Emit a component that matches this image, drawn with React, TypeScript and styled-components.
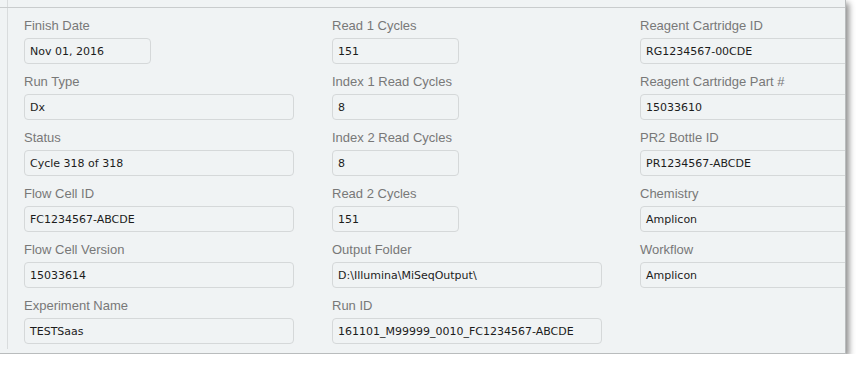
import React from 'react';
import styled, {createGlobalStyle} from "styled-components";

type fieldType = {
    label: string
    value: string
    wide?: boolean
}

const columns: Array<Array<fieldType>> = [
    [
        {label: 'Finish Date', value: 'Nov 01, 2016'},
        {label: 'Run Type', value: 'Dx', wide: true},
        {label: 'Status', value: 'Cycle 318 of 318', wide: true},
        {label: 'Flow Cell ID', value: 'FC1234567-ABCDE', wide: true},
        {label: 'Flow Cell Version', value: '15033614', wide: true},
        {label: 'Experiment Name', value: 'TESTSaas', wide: true},
    ],
    [
        {label: 'Read 1 Cycles', value: '151'},
        {label: 'Index 1 Read Cycles', value: '8'},
        {label: 'Index 2 Read Cycles', value: '8'},
        {label: 'Read 2 Cycles', value: '151'},
        {label: 'Output Folder', value: 'D:\\Illumina\\MiSeqOutput\\', wide: true},
        {label: 'Run ID', value: '161101_M99999_0010_FC1234567-ABCDE', wide: true},
    ],
    [
        {label: 'Reagent Cartridge ID', value: 'RG1234567-00CDE', wide: true},
        {label: 'Reagent Cartridge Part #', value: '15033610', wide: true},
        {label: 'PR2 Bottle ID', value: 'PR1234567-ABCDE', wide: true},
        {label: 'Chemistry', value: 'Amplicon', wide: true},
        {label: 'Workflow', value: 'Amplicon', wide: true},
    ],
]

const App = () => {
    return (
        <>
            <GlobalStyle/>
            <Panel>
                <Content>
                    {columns.map((col, i) => (
                        <Column key={i}>
                            {col.map(f => (
                                <Field key={f.label}>
                                    <Label>{f.label}</Label>
                                    <ValueBox wide={f.wide}>{f.value}</ValueBox>
                                </Field>
                            ))}
                        </Column>
                    ))}
                </Content>
            </Panel>
        </>
    )
}

export default App

const GlobalStyle = createGlobalStyle`
  body {
    margin: 0;
    background: #ffffff;
    font-family: "Liberation Sans", Arial, sans-serif;
  }
`

const Panel = styled.div`
  width: 846px;
  height: 354px;
  overflow: hidden;
  box-sizing: border-box;
  border-right: 1px solid #b9bcbd;
  border-bottom: 1px solid #b9bcbd;
  box-shadow: 3px 3px 6px rgba(0, 0, 0, 0.45);
  background: linear-gradient(#c9cccd, #c9cccd) 0 7px / 100% 1px no-repeat,
  linear-gradient(#d9dcdd, #d9dcdd) 7px 0 / 1px 349px no-repeat,
  #f0f3f4;
`

const Content = styled.div`
  display: grid;
  grid-template-columns: 308px 308px 308px;
  padding: 16px 0 0 24px;
`

const Column = styled.div`
  display: flex;
  flex-direction: column;
  gap: 8px;
`

const Field = styled.div`
  display: flex;
  flex-direction: column;
  gap: 3px;
`

const Label = styled.div`
  padding-top: 1px;
  font-size: 13px;
  line-height: 18px;
  color: #787878;
`

const ValueBox = styled.div<{ wide?: boolean }>`
  width: ${p => p.wide ? '270px' : '127px'};
  height: 26px;
  box-sizing: border-box;
  border: 1px solid #d5d8d9;
  border-radius: 4px;
  padding: 0 5px;
  display: flex;
  align-items: center;
  font-family: "DejaVu Sans", Tahoma, sans-serif;
  font-size: 11px;
  color: #1c1c1c;
  white-space: nowrap;
`
